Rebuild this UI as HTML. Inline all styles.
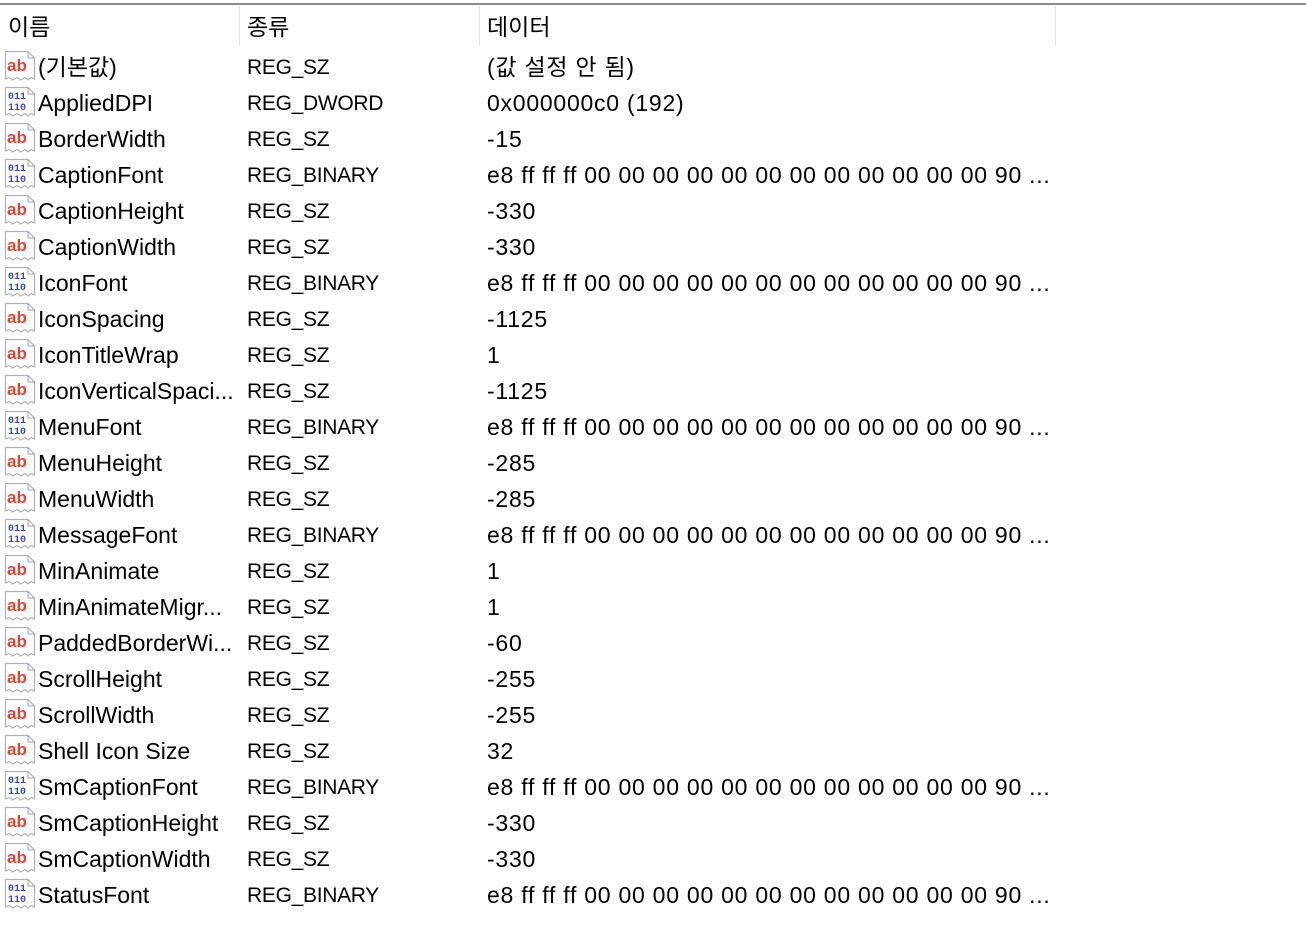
<!DOCTYPE html>
<html><head><meta charset="utf-8"><style>
body{margin:0;width:1306px;height:940px;background:#fff;overflow:hidden;font-family:"Liberation Sans","Noto Sans CJK KR",sans-serif;color:#000}
.top{position:absolute;left:0;top:3px;width:1306px;height:2px;background:#8a8a8a}
.sep{position:absolute;top:6px;height:40px;width:1px;background:#e5e5e5}
.h{position:absolute;top:13px;font-size:23px;line-height:28px}
.row{position:absolute;left:0;height:36px;width:1306px}
.ic{position:absolute;left:4px;top:2px}
.n{position:absolute;left:38px;top:5px;font-size:23px;line-height:28px;white-space:nowrap}
.t{position:absolute;left:247px;top:6px;font-size:21px;line-height:28px;white-space:nowrap;letter-spacing:-0.3px}
.d{position:absolute;left:487px;top:5px;font-size:23px;line-height:28px;white-space:nowrap;letter-spacing:0.75px}
</style></head><body>
<div class="top"></div>
<div class="sep" style="left:239px"></div>
<div class="sep" style="left:479px"></div>
<div class="sep" style="left:1055px"></div>
<div class="h" style="left:8px">이름</div>
<div class="h" style="left:247px">종류</div>
<div class="h" style="left:487px">데이터</div>
<svg width="0" height="0" style="position:absolute">
<defs>
<g id="pg"><path d="M1.5 1.5H24L30.5 8V29L27 27.5 24 30 21 27.5 17 30 13 27.5 9 30 5 27.5 1.5 29Z" fill="#fff" stroke="#b0b0b0" stroke-width="1.2"/><path d="M24 1.5V8H30.5" fill="none" stroke="#b0b0b0" stroke-width="1.2"/></g>
<g id="ab"><use href="#pg"/><text x="3" y="21" font-family="Liberation Sans" font-size="17" font-weight="bold" fill="#e0453a">ab</text></g>
<g id="bin"><use href="#pg"/><text x="4" y="13" font-family="Liberation Mono" font-size="10" font-weight="bold" fill="#3a4eb0">011</text><text x="4" y="24" font-family="Liberation Mono" font-size="10" font-weight="bold" fill="#3a4eb0">110</text></g>
</defs></svg>
<div id="rows"></div>
<script>
var R=[["ab","(기본값)","REG_SZ","(값 설정 안 됨)"],["bin","AppliedDPI","REG_DWORD","0x000000c0 (192)"],["ab","BorderWidth","REG_SZ","-15"],["bin","CaptionFont","REG_BINARY","B"],["ab","CaptionHeight","REG_SZ","-330"],["ab","CaptionWidth","REG_SZ","-330"],["bin","IconFont","REG_BINARY","B"],["ab","IconSpacing","REG_SZ","-1125"],["ab","IconTitleWrap","REG_SZ","1"],["ab","IconVerticalSpaci...","REG_SZ","-1125"],["bin","MenuFont","REG_BINARY","B"],["ab","MenuHeight","REG_SZ","-285"],["ab","MenuWidth","REG_SZ","-285"],["bin","MessageFont","REG_BINARY","B"],["ab","MinAnimate","REG_SZ","1"],["ab","MinAnimateMigr...","REG_SZ","1"],["ab","PaddedBorderWi...","REG_SZ","-60"],["ab","ScrollHeight","REG_SZ","-255"],["ab","ScrollWidth","REG_SZ","-255"],["ab","Shell Icon Size","REG_SZ","32"],["bin","SmCaptionFont","REG_BINARY","B"],["ab","SmCaptionHeight","REG_SZ","-330"],["ab","SmCaptionWidth","REG_SZ","-330"],["bin","StatusFont","REG_BINARY","B"]];
var B="e8 ff ff ff 00 00 00 00 00 00 00 00 00 00 00 00 90 ...";
var h="";R.forEach(function(r,i){h+='<div class="row" style="top:'+(48+i*36)+'px"><svg class="ic" width="32" height="32"><use href="#'+r[0]+'"/></svg><div class="n">'+r[1]+'</div><div class="t">'+r[2]+'</div><div class="d">'+(r[3]=="B"?B:r[3])+'</div></div>';});
document.getElementById("rows").innerHTML=h;
</script>
</body></html>
